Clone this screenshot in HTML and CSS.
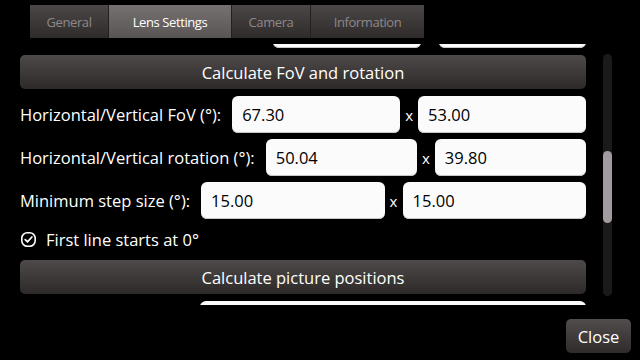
FILE: index.html
```html
<!DOCTYPE html>
<html lang="en">
<head>
    <meta charset="UTF-8">
    <meta name="viewport" content="width=device-width, initial-scale=1.0">
    <title>Lens Settings</title>
    <link rel="stylesheet" href="styles.css">
</head>
<body>
    <div class="tabs">
        <div class="tab tab-general">General</div>
        <div class="tab tab-lens active">Lens Settings</div>
        <div class="tab tab-camera">Camera</div>
        <div class="tab tab-info">Information</div>
    </div>

    <div class="main">
        <div class="scroll">
            <div class="content">
                <!-- row scrolled out of view above, only the input bottoms show -->
                <div class="row row-sensor">
                    <label></label>
                    <input type="text">
                    <span class="times"></span>
                    <input type="text">
                </div>

                <button class="wide">Calculate FoV and rotation</button>

                <div class="row">
                    <label>Horizontal/Vertical FoV (°):</label>
                    <input type="text" value="67.30">
                    <span class="times">x</span>
                    <input type="text" value="53.00">
                </div>

                <div class="row">
                    <label>Horizontal/Vertical rotation (°):</label>
                    <input type="text" value="50.04">
                    <span class="times">x</span>
                    <input type="text" value="39.80">
                </div>

                <div class="row">
                    <label>Minimum step size (°):</label>
                    <input type="text" value="15.00">
                    <span class="times">x</span>
                    <input type="text" value="15.00">
                </div>

                <label class="check">
                    <svg width="15" height="15" viewBox="0 0 15 15">
                        <rect x="0.8" y="0.8" width="13.4" height="13.4" rx="5.5" fill="none" stroke="#fff" stroke-width="1.6"/>
                        <path d="M4.2 7.6 L6.5 9.9 L10.9 5" fill="none" stroke="#fff" stroke-width="1.7" stroke-linecap="round" stroke-linejoin="round"/>
                    </svg>
                    First line starts at 0°
                </label>

                <button class="wide">Calculate picture positions</button>

                <!-- next row, cut off below -->
                <div class="row row-positions">
                    <label></label>
                    <input type="text">
                </div>
            </div>
        </div>

        <div class="scrollbar">
            <div class="thumb" style="margin-top: 97px"></div>
        </div>
    </div>

    <div class="footer">
        <button class="close">Close</button>
    </div>
</body>
</html>
```

FILE: styles.css
```css
body {
    margin: 0;
    background-color: #000;
    height: 360px;
    overflow: hidden;
    font-family: "Open Sans", "Noto Sans", sans-serif;
    color: #fff;
}

.tabs {
    display: flex;
    margin: 5px 0 0 30px;
    height: 33px;
}

.tab {
    display: flex;
    justify-content: center;
    align-items: center;
    font-size: 13px;
    letter-spacing: -0.4px;
    line-height: 18px;
    color: #8e8989;
    background: linear-gradient(#4c4747, #2f2b2b);
    border-right: 1px solid #231f1f;
    box-sizing: border-box;
}

.tab.active {
    color: #fff;
    background: linear-gradient(#767171, #5a5555);
}

.tab-general { width: 79px; }
.tab-lens { width: 123px; }
.tab-camera { width: 79px; }
.tab-info { width: 113px; border-right: none; }

.main {
    display: flex;
    margin-top: 6px;
    height: 261px;
}

.scroll {
    margin-left: 20px;
    width: 566px;
    overflow: hidden;
}

.content {
    display: flex;
    flex-direction: column;
    gap: 6px;
    margin-top: -33px;
}

.row {
    display: flex;
    align-items: center;
    height: 37px;
    flex-shrink: 0;
}

.row label {
    font-size: 16.5px;
    margin-right: 11px;
    white-space: nowrap;
}

.row input {
    flex: 1;
    min-width: 0;
    height: 37px;
    box-sizing: border-box;
    border: none;
    border-radius: 6px;
    background-color: #fcfbfc;
    box-shadow: inset 0 -1px 0 #c9c6c9;
    padding: 0 10px;
    font-family: "Open Sans", "Noto Sans", sans-serif;
    font-size: 16.5px;
    color: #000;
}

.row input:focus {
    outline: none;
}

.times {
    width: 18px;
    flex-shrink: 0;
    text-align: center;
    font-size: 15px;
}

.row-sensor label {
    width: 242px;
    flex-shrink: 0;
}

.row-positions label {
    width: 169px;
    flex-shrink: 0;
}

.wide {
    flex-shrink: 0;
    height: 34px;
    margin: 1px 0;
    border: none;
    border-radius: 5px;
    background: linear-gradient(#4f4a4a, #2d2929);
    color: #fff;
    font-family: "Open Sans", "Noto Sans", sans-serif;
    font-size: 16.5px;
}

.check {
    display: flex;
    align-items: center;
    gap: 10px;
    height: 28px;
    padding-left: 1px;
    font-size: 16.5px;
    flex-shrink: 0;
}

.scrollbar {
    display: flex;
    flex-direction: column;
    margin: 10px 0 0 17px;
    width: 9px;
    height: 242px;
    border-radius: 5px;
    background-color: #1b1a1b;
}

.thumb {
    height: 72px;
    border-radius: 5px;
    background-color: #a19ba1;
}

.footer {
    display: flex;
    justify-content: flex-end;
    margin-top: 14px;
    padding-right: 9px;
}

.close {
    width: 65px;
    height: 34px;
    border: none;
    border-radius: 5px;
    background: linear-gradient(#524d4d, #2f2b2b);
    color: #fff;
    font-family: "Open Sans", "Noto Sans", sans-serif;
    font-size: 16.5px;
}
```
